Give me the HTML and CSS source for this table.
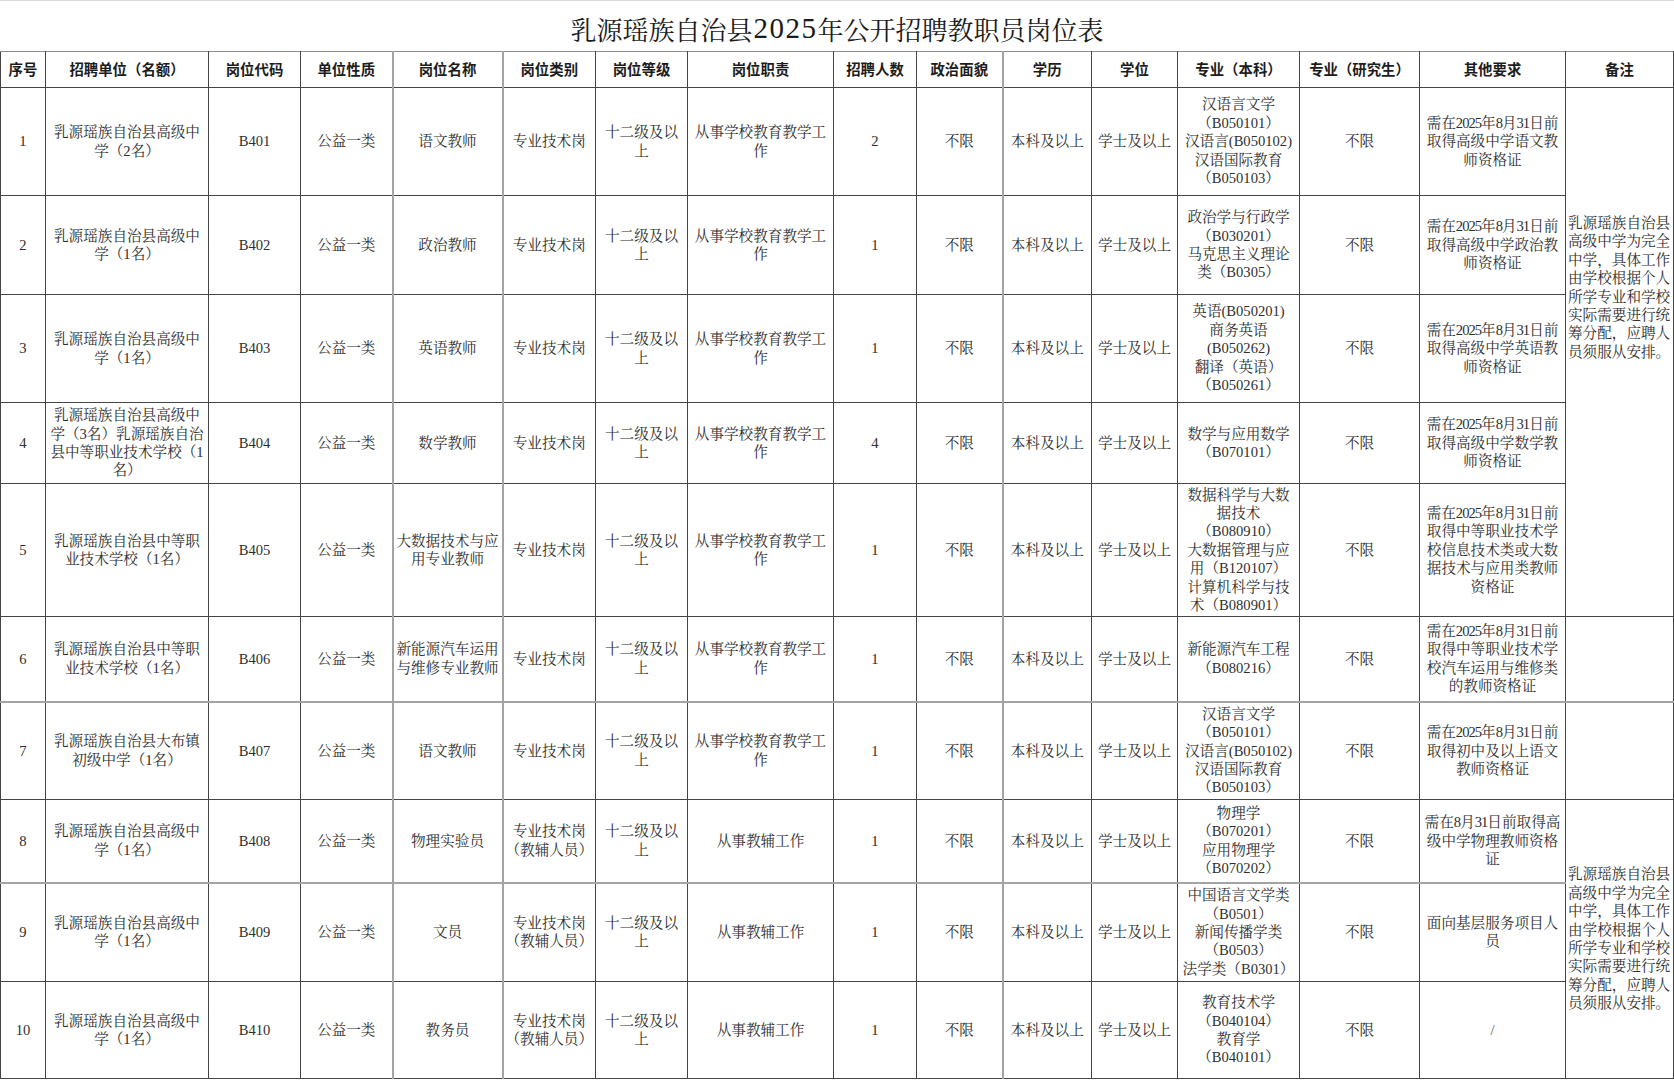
FILE: index.html
```html
<!DOCTYPE html>
<html lang="zh-CN">
<head>
<meta charset="utf-8">
<title>乳源瑶族自治县2025年公开招聘教职员岗位表</title>
<link rel="stylesheet" href="styles.css">
</head>
<body>
<div class="sheet">
  <div class="title">乳源瑶族自治县<span class="tnum">2025</span>年公开招聘教职员岗位表</div>
  <table class="grid">
    <colgroup>
      <col class="w45"><col class="w163"><col class="w92"><col class="w92"><col class="w110"><col class="w93"><col class="w92"><col class="w146"><col class="w83"><col class="w86"><col class="w89"><col class="w86"><col class="w122"><col class="w120"><col class="w146"><col class="w108">
    </colgroup>
    <thead>
      <tr class="rh">
        <th>序号</th><th>招聘单位（名额）</th><th>岗位代码</th><th class="lg">单位性质</th><th class="lg">岗位名称</th><th>岗位类别</th><th>岗位等级</th><th>岗位职责</th><th>招聘人数</th><th class="lg">政治面貌</th><th>学历</th><th>学位</th><th>专业（本科）</th><th>专业（研究生）</th><th>其他要求</th><th>备注</th>
      </tr>
    </thead>
    <tbody>
      <tr class="r1">
        <td>1</td>
        <td>乳源瑶族自治县高级中<br>学（2名）</td>
        <td>B401</td>
        <td class="lg">公益一类</td>
        <td class="lg">语文教师</td>
        <td>专业技术岗</td>
        <td>十二级及以<br>上</td>
        <td>从事学校教育教学工<br>作</td>
        <td>2</td>
        <td class="lg">不限</td>
        <td>本科及以上</td>
        <td>学士及以上</td>
        <td>汉语言文学<br>（B050101）<br>汉语言(B050102)<br>汉语国际教育<br>（B050103）</td>
        <td>不限</td>
        <td>需在<span class="nd">2025</span>年<span class="nd">8</span>月<span class="nd">31</span>日前<br>取得高级中学语文教<br>师资格证</td>
        <td rowspan="5" class="note top">乳源瑶族自治县<br>高级中学为完全<br>中学，具体工作<br>由学校根据个人<br>所学专业和学校<br>实际需要进行统<br>筹分配，应聘人<br>员须服从安排。</td>
      </tr>
      <tr class="r2">
        <td>2</td>
        <td>乳源瑶族自治县高级中<br>学（1名）</td>
        <td>B402</td>
        <td class="lg">公益一类</td>
        <td class="lg">政治教师</td>
        <td>专业技术岗</td>
        <td>十二级及以<br>上</td>
        <td>从事学校教育教学工<br>作</td>
        <td>1</td>
        <td class="lg">不限</td>
        <td>本科及以上</td>
        <td>学士及以上</td>
        <td>政治学与行政学<br>（B030201）<br>马克思主义理论<br>类（B0305）</td>
        <td>不限</td>
        <td>需在<span class="nd">2025</span>年<span class="nd">8</span>月<span class="nd">31</span>日前<br>取得高级中学政治教<br>师资格证</td>
      </tr>
      <tr class="r3">
        <td>3</td>
        <td>乳源瑶族自治县高级中<br>学（1名）</td>
        <td>B403</td>
        <td class="lg">公益一类</td>
        <td class="lg">英语教师</td>
        <td>专业技术岗</td>
        <td>十二级及以<br>上</td>
        <td>从事学校教育教学工<br>作</td>
        <td>1</td>
        <td class="lg">不限</td>
        <td>本科及以上</td>
        <td>学士及以上</td>
        <td>英语(B050201)<br>商务英语<br>(B050262)<br>翻译（英语）<br>（B050261）</td>
        <td>不限</td>
        <td>需在<span class="nd">2025</span>年<span class="nd">8</span>月<span class="nd">31</span>日前<br>取得高级中学英语教<br>师资格证</td>
      </tr>
      <tr class="r4">
        <td>4</td>
        <td>乳源瑶族自治县高级中<br>学（3名）乳源瑶族自治<br>县中等职业技术学校（1<br>名）</td>
        <td>B404</td>
        <td class="lg">公益一类</td>
        <td class="lg">数学教师</td>
        <td>专业技术岗</td>
        <td>十二级及以<br>上</td>
        <td>从事学校教育教学工<br>作</td>
        <td>4</td>
        <td class="lg">不限</td>
        <td>本科及以上</td>
        <td>学士及以上</td>
        <td>数学与应用数学<br>（B070101）</td>
        <td>不限</td>
        <td>需在<span class="nd">2025</span>年<span class="nd">8</span>月<span class="nd">31</span>日前<br>取得高级中学数学教<br>师资格证</td>
      </tr>
      <tr class="r5">
        <td>5</td>
        <td>乳源瑶族自治县中等职<br>业技术学校（1名）</td>
        <td>B405</td>
        <td class="lg">公益一类</td>
        <td class="lg">大数据技术与应<br>用专业教师</td>
        <td>专业技术岗</td>
        <td>十二级及以<br>上</td>
        <td>从事学校教育教学工<br>作</td>
        <td>1</td>
        <td class="lg">不限</td>
        <td>本科及以上</td>
        <td>学士及以上</td>
        <td>数据科学与大数<br>据技术<br>（B080910）<br>大数据管理与应<br>用（B120107）<br>计算机科学与技<br>术（B080901）</td>
        <td>不限</td>
        <td>需在<span class="nd">2025</span>年<span class="nd">8</span>月<span class="nd">31</span>日前<br>取得中等职业技术学<br>校信息技术类或大数<br>据技术与应用类教师<br>资格证</td>
      </tr>
      <tr class="r6 soft">
        <td>6</td>
        <td>乳源瑶族自治县中等职<br>业技术学校（1名）</td>
        <td>B406</td>
        <td class="lg">公益一类</td>
        <td class="lg">新能源汽车运用<br>与维修专业教师</td>
        <td>专业技术岗</td>
        <td>十二级及以<br>上</td>
        <td>从事学校教育教学工<br>作</td>
        <td>1</td>
        <td class="lg">不限</td>
        <td>本科及以上</td>
        <td>学士及以上</td>
        <td>新能源汽车工程<br>（B080216）</td>
        <td>不限</td>
        <td>需在<span class="nd">2025</span>年<span class="nd">8</span>月<span class="nd">31</span>日前<br>取得中等职业技术学<br>校汽车运用与维修类<br>的教师资格证</td>
        <td></td>
      </tr>
      <tr class="r7">
        <td>7</td>
        <td>乳源瑶族自治县大布镇<br>初级中学（1名）</td>
        <td>B407</td>
        <td class="lg">公益一类</td>
        <td class="lg">语文教师</td>
        <td>专业技术岗</td>
        <td>十二级及以<br>上</td>
        <td>从事学校教育教学工<br>作</td>
        <td>1</td>
        <td class="lg">不限</td>
        <td>本科及以上</td>
        <td>学士及以上</td>
        <td>汉语言文学<br>（B050101）<br>汉语言(B050102)<br>汉语国际教育<br>（B050103）</td>
        <td>不限</td>
        <td>需在<span class="nd">2025</span>年<span class="nd">8</span>月<span class="nd">31</span>日前<br>取得初中及以上语文<br>教师资格证</td>
        <td></td>
      </tr>
      <tr class="r8 soft">
        <td>8</td>
        <td>乳源瑶族自治县高级中<br>学（1名）</td>
        <td>B408</td>
        <td class="lg">公益一类</td>
        <td class="lg">物理实验员</td>
        <td>专业技术岗<br>（教辅人员）</td>
        <td>十二级及以<br>上</td>
        <td>从事教辅工作</td>
        <td>1</td>
        <td class="lg">不限</td>
        <td>本科及以上</td>
        <td>学士及以上</td>
        <td>物理学<br>（B070201）<br>应用物理学<br>（B070202）</td>
        <td>不限</td>
        <td>需在<span class="nd">8</span>月<span class="nd">31</span>日前取得高<br>级中学物理教师资格<br>证</td>
        <td rowspan="3" class="note mid">乳源瑶族自治县<br>高级中学为完全<br>中学，具体工作<br>由学校根据个人<br>所学专业和学校<br>实际需要进行统<br>筹分配，应聘人<br>员须服从安排。</td>
      </tr>
      <tr class="r9">
        <td>9</td>
        <td>乳源瑶族自治县高级中<br>学（1名）</td>
        <td>B409</td>
        <td class="lg">公益一类</td>
        <td class="lg">文员</td>
        <td>专业技术岗<br>（教辅人员）</td>
        <td>十二级及以<br>上</td>
        <td>从事教辅工作</td>
        <td>1</td>
        <td class="lg">不限</td>
        <td>本科及以上</td>
        <td>学士及以上</td>
        <td>中国语言文学类<br>（B0501）<br>新闻传播学类<br>（B0503）<br>法学类（B0301）</td>
        <td>不限</td>
        <td>面向基层服务项目人<br>员</td>
      </tr>
      <tr class="r10">
        <td>10</td>
        <td>乳源瑶族自治县高级中<br>学（1名）</td>
        <td>B410</td>
        <td class="lg">公益一类</td>
        <td class="lg">教务员</td>
        <td>专业技术岗<br>（教辅人员）</td>
        <td>十二级及以<br>上</td>
        <td>从事教辅工作</td>
        <td>1</td>
        <td class="lg">不限</td>
        <td>本科及以上</td>
        <td>学士及以上</td>
        <td>教育技术学<br>（B040104）<br>教育学<br>（B040101）</td>
        <td>不限</td>
        <td class="slash">/</td>
      </tr>
    </tbody>
  </table>
</div>
</body>
</html>
```

FILE: styles.css
```css
html, body {
  margin: 0;
  padding: 0;
  background: #ffffff;
}

body {
  font-family: "Liberation Serif", "Noto Serif CJK SC", "Noto Sans CJK SC", serif;
  color: #2e2e2e;
}

.sheet {
  width: 1674px;
  border-top: 1px solid #d9d9d9;
}

.title {
  height: 46px;
  padding-top: 4px;
  display: flex;
  align-items: center;
  justify-content: center;
  font-size: 26px;
  color: #1a1a1a;
}

.tnum {
  font-family: "Liberation Serif", serif;
  font-size: 29px;
  letter-spacing: 1.5px;
  margin-left: 1px;
}

.grid {
  width: 1674px;
  border-collapse: collapse;
  table-layout: fixed;
}

.w45 { width: 45px; }
.w163 { width: 163px; }
.w92 { width: 92px; }
.w110 { width: 110px; }
.w93 { width: 93px; }
.w146 { width: 146px; }
.w83 { width: 83px; }
.w86 { width: 86px; }
.w89 { width: 89px; }
.w122 { width: 122px; }
.w120 { width: 120px; }
.w108 { width: 108px; }

.grid th,
.grid td {
  border: 1px solid #454545;
  padding: 0 1px;
  text-align: center;
  vertical-align: middle;
  white-space: nowrap;
  font-size: 14.6px;
  line-height: 18.4px;
  overflow: visible;
}

.grid th {
  font-family: "Noto Sans CJK SC", sans-serif;
  font-weight: 700;
  font-size: 14.4px;
  color: #1c1c1c;
  border-top-color: #8c8c8c;
}

/* lighter vertical rules (right edges of 单位性质, 岗位名称, 政治面貌) */
.grid th.lg,
.grid td.lg {
  border-right: 2px solid #a3a3a3;
}

/* lighter horizontal rules under rows 6 and 8 */
.grid tr.soft td {
  border-bottom: 2px solid #a3a3a3;
}

.grid tr.soft td.note {
  border-bottom: 1px solid #454545;
}

.rh { height: 36px; }
.r1 { height: 108px; }
.r2 { height: 99px; }
.r3 { height: 108px; }
.r4 { height: 81px; }
.r5 { height: 133px; }
.r6 { height: 85px; }
.r7 { height: 98px; }
.r8 { height: 83px; }
.r9 { height: 99px; }
.r10 { height: 97px; }

.nd {
  letter-spacing: -1px;
}

.grid td.note {
  text-align: left;
  padding-left: 2px;
}

.grid td.note.top {
  vertical-align: top;
  padding-top: 126px;
}

.grid td.note.mid {
  vertical-align: middle;
}

.grid td.slash {
  color: #555555;
}
```
